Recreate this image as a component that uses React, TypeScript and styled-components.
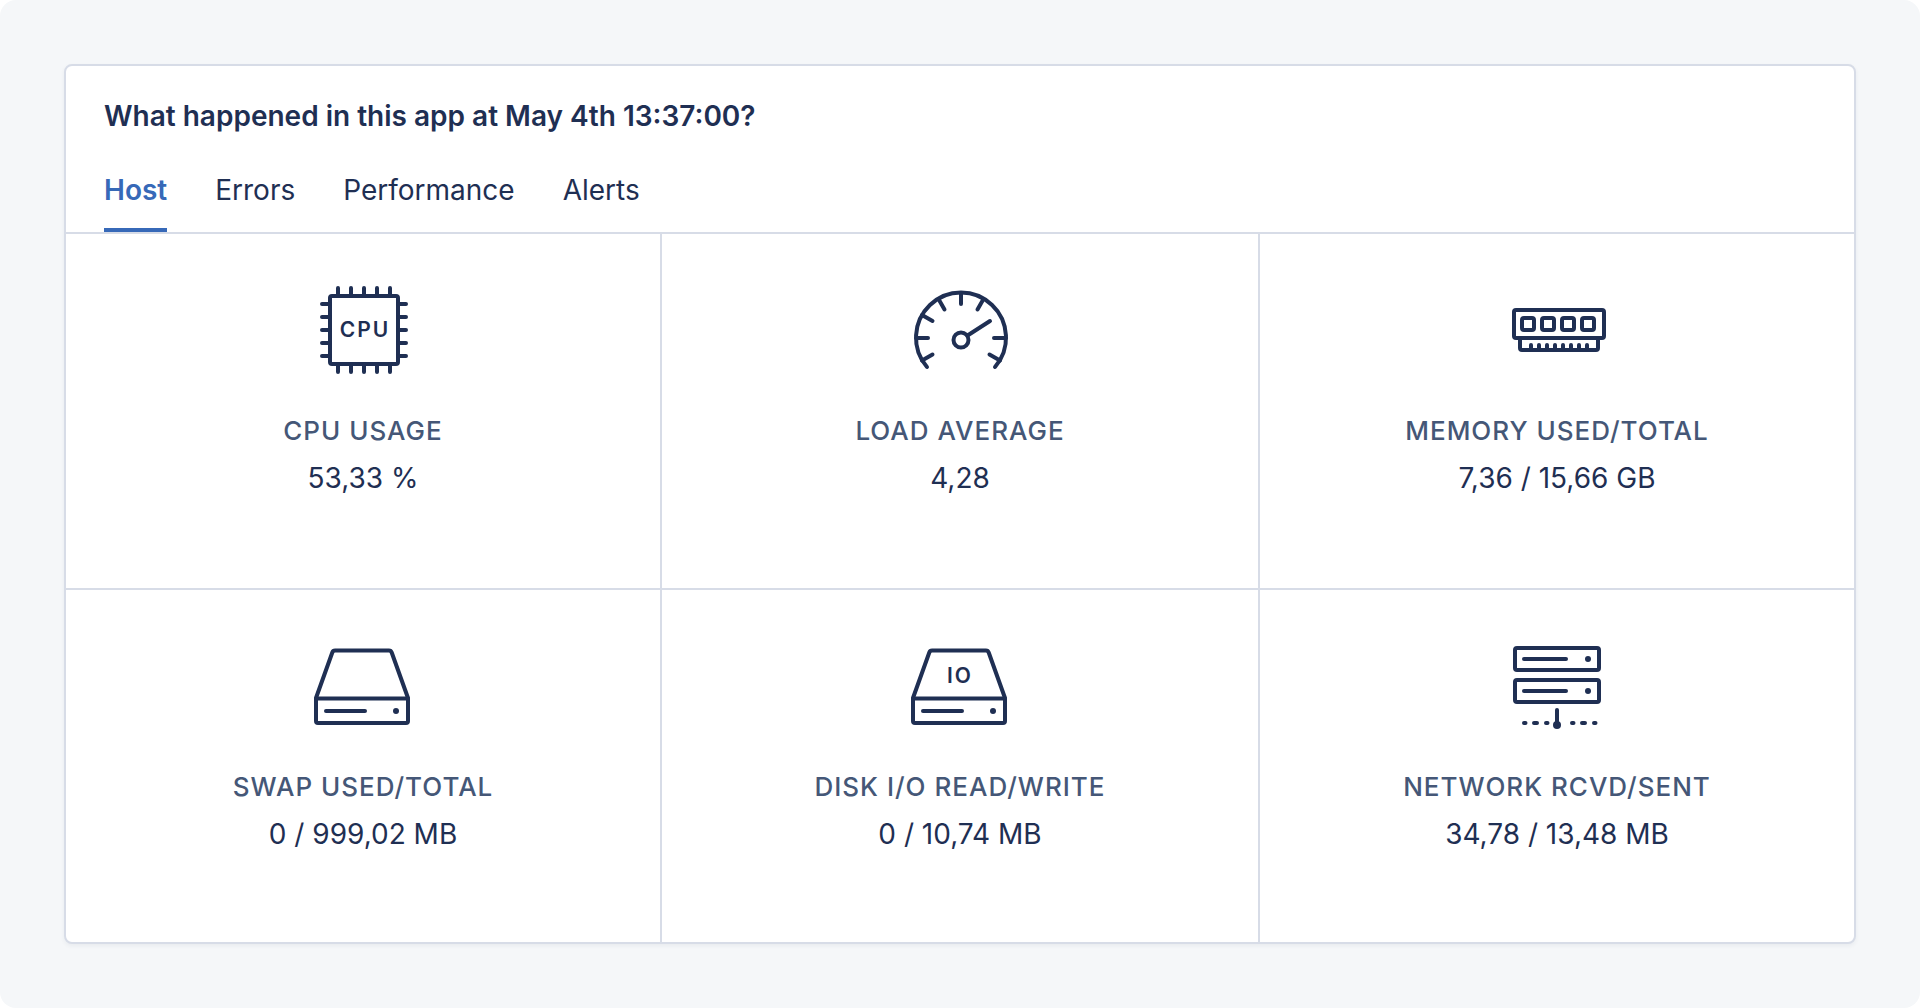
import React, { useState } from "react";
import styled, { createGlobalStyle } from "styled-components";

const GlobalStyle = createGlobalStyle`
  *, *::before, *::after { box-sizing: border-box; }
  html { background: #ffffff; }
  body {
    margin: 0;
    font-family: Inter, "Liberation Sans", sans-serif;
    color: #1f2f53;
  }
`;

const Page = styled.main`
  min-height: 100vh;
  display: flex;
  padding: 64px;
  background: #f5f7f9;
  border-radius: 16px;
`;

const Card = styled.section`
  flex: 1;
  min-width: 0;
  display: flex;
  flex-direction: column;
  background: #ffffff;
  border: 2px solid #d7dce7;
  border-radius: 8px;
  box-shadow: 0 2px 4px rgba(31, 47, 83, 0.06);
`;

const Header = styled.header`
  padding: 30px 38px 0;
  border-bottom: 2px solid #d7dce7;
`;

const Title = styled.h1`
  margin: 0;
  font-size: 28px;
  line-height: 40px;
  font-weight: 600;
`;

const Tabs = styled.div`
  display: flex;
  gap: 48px;
  margin-top: 34px;
`;

const Tab = styled.button<{ $active: boolean }>`
  height: 62px;
  padding: 0 0 18px;
  border: 0;
  border-bottom: 4px solid ${(p) => (p.$active ? "#3769b8" : "transparent")};
  background: none;
  color: ${(p) => (p.$active ? "#3769b8" : "#1f2f53")};
  font-family: inherit;
  font-size: 28px;
  line-height: 40px;
  font-weight: ${(p) => (p.$active ? 600 : 400)};
  cursor: pointer;
`;

const Metrics = styled.div`
  flex: 1;
  display: grid;
  grid-template-columns: repeat(3, 1fr);
  grid-template-rows: minmax(356px, auto) 1fr;
`;

const Metric = styled.article`
  display: flex;
  flex-direction: column;
  align-items: center;
  padding: 48px 24px;

  &:nth-child(-n + 3) {
    border-bottom: 2px solid #d7dce7;
  }
  &:nth-child(3n + 1) {
    border-right: 2px solid #d7dce7;
  }
  &:nth-child(3n) {
    border-left: 2px solid #d7dce7;
  }
`;

const Icon = styled.svg`
  width: 96px;
  height: 96px;
  overflow: visible;
  fill: none;
  stroke: #1f2f53;
  stroke-width: 4px;
  stroke-linecap: round;
  stroke-linejoin: round;
`;

const IconText = styled.text`
  fill: #1f2f53;
  stroke: none;
  font-size: 21px;
  font-weight: 600;
  letter-spacing: 2px;
  text-anchor: middle;
`;

const Label = styled.h2`
  margin: 32px 0 0;
  color: #455777;
  font-size: 26px;
  line-height: 42px;
  font-weight: 500;
  letter-spacing: 1px;
  text-transform: uppercase;
`;

const Value = styled.p`
  margin: 6px 0 0;
  font-size: 28px;
  line-height: 40px;
`;

const pins = [22, 35, 48, 61, 74];

const CpuIcon = () => (
  <Icon viewBox="-1 0 96 96" aria-hidden="true">
    <rect x="14" y="14" width="68" height="68" rx="2" />
    {pins.map((p) => (
      <path key={p} d={`M${p} 14V6M${p} 82v8M14 ${p}H6M82 ${p}h8`} />
    ))}
    <IconText x="49" y="55">CPU</IconText>
  </Icon>
);

const GaugeIcon = () => (
  <Icon viewBox="-1 0 96 96" aria-hidden="true">
    <path d="M14 85A45 45 0 1 1 82 85" />
    <path d="M48 11V22M25.500 17L31.500 27.500M70.500 17L64.500 27.500M9 33L19.500 39M3 56H15M93 56H81M9 78.500L19.500 72.500M87 78.500L76.500 72.500" />
    <circle cx="48" cy="58" r="7.500" />
    <path d="M54.500 53.500L77 39" />
  </Icon>
);

const MemoryIcon = () => (
  <Icon viewBox="-2 0 96 96" aria-hidden="true">
    <rect x="3" y="28" width="90" height="28" rx="2" />
    {[11, 31, 51, 71].map((x) => (
      <rect key={x} x={x} y="36" width="12" height="12" rx="2" />
    ))}
    <path d="M9 57V66a2 2 0 0 0 2 2H85a2 2 0 0 0 2-2V57" />
    {[20, 28, 36, 44, 52, 60, 68, 76].map((x) => (
      <path key={x} d={`M${x} 63V67`} />
    ))}
  </Icon>
);

const DiskIcon = ({ text }: { text?: string }) => (
  <Icon viewBox="1 0 96 96" aria-hidden="true">
    <path d="M2 60L18.300 14.500Q19 12.500 21 12.500H75Q77 12.500 77.700 14.500L94 60" />
    <path d="M2 60.500H94V83a2 2 0 0 1-2 2H4a2 2 0 0 1-2-2Z" />
    <path d="M12 73H51" />
    <circle cx="82" cy="73" r="3" fill="#1f2f53" stroke="none" />
    {text && <IconText x="49" y="45">{text}</IconText>}
  </Icon>
);

const NetworkIcon = () => (
  <Icon viewBox="0 0 96 96" aria-hidden="true">
    {[10, 42].map((y) => (
      <g key={y}>
        <rect x="6" y={y} width="84" height="22" rx="2" />
        <path d={`M15 ${y + 11}H57`} />
        <circle cx="79" cy={y + 11} r="3" fill="#1f2f53" stroke="none" />
      </g>
    ))}
    <path d="M48 72V86" />
    <circle cx="48" cy="87" r="4" fill="#1f2f53" stroke="none" />
    <path d="M15 85h1.500M25 85h3M37 85h1.500M63 85h1.500M73 85h3M85 85h1.500" />
  </Icon>
);

const tabs = ["Host", "Errors", "Performance", "Alerts"];

const metrics = [
  { label: "CPU usage", value: "53,33 %", icon: <CpuIcon /> },
  { label: "Load average", value: "4,28", icon: <GaugeIcon /> },
  { label: "Memory used/total", value: "7,36 / 15,66 GB", icon: <MemoryIcon /> },
  { label: "Swap used/total", value: "0 / 999,02 MB", icon: <DiskIcon /> },
  { label: "Disk I/O read/write", value: "0 / 10,74 MB", icon: <DiskIcon text="IO" /> },
  { label: "Network rcvd/sent", value: "34,78 / 13,48 MB", icon: <NetworkIcon /> },
];

export default function App() {
  const [active, setActive] = useState("Host");
  return (
    <>
      <GlobalStyle />
      <Page>
        <Card>
          <Header>
            <Title>What happened in this app at May 4th 13:37:00?</Title>
            <Tabs role="tablist">
              {tabs.map((t) => (
                <Tab
                  key={t}
                  type="button"
                  role="tab"
                  aria-selected={t === active}
                  $active={t === active}
                  onClick={() => setActive(t)}
                >
                  {t}
                </Tab>
              ))}
            </Tabs>
          </Header>
          <Metrics>
            {metrics.map((m) => (
              <Metric key={m.label}>
                {m.icon}
                <Label>{m.label}</Label>
                <Value>{m.value}</Value>
              </Metric>
            ))}
          </Metrics>
        </Card>
      </Page>
    </>
  );
}
